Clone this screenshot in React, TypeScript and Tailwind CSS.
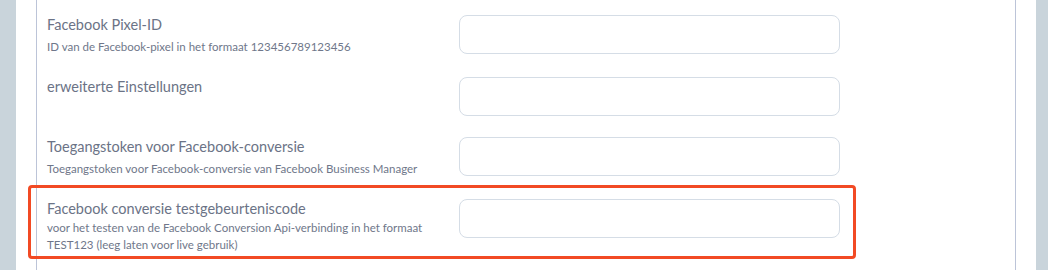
import React from 'react';

interface FieldRowProps {
  label: string;
  description?: React.ReactNode;
  height: string;
  descClass?: string;
  highlight?: boolean;
}

const FieldRow: React.FC<FieldRowProps> = ({ label, description, height, descClass = 'mt-[3px]', highlight = false }) => {
  return (
    <div className={`relative flex pl-[10px] ${height}`}>
      {/* Label + help text */}
      <div className="w-[412px] shrink-0 pt-[15px]">
        <div className="text-[14.5px] leading-5 text-[#6b7386]">{label}</div>
        {description && (
          <div className={`text-[11.5px] leading-[17px] text-[#6f778a] ${descClass}`}>{description}</div>
        )}
      </div>

      {/* Input */}
      <div className="pt-[15px]">
        <input
          type="text"
          className="h-[39px] w-[381px] rounded-lg border border-[#d5dde6] bg-white outline-none"
        />
      </div>

      {/* Annotation box */}
      {highlight && (
        <div className="pointer-events-none absolute top-[0.5px] -left-[9px] h-[74px] w-[828px] rounded-[4px] border-[3px] border-[#f24a24]" />
      )}
    </div>
  );
};

export default function App() {
  return (
    <div
      className="flex h-[270px] w-[1048px] overflow-hidden bg-white"
      style={{ fontFamily: 'Lato, "Noto Sans", sans-serif' }}
    >
      <div className="w-4 shrink-0 bg-[#c9d4db]" />

      <div className="flex-1 px-5">
        <div className="h-full border-x border-[#bcc4d8]">
          <FieldRow
            height="h-[62px]"
            label="Facebook Pixel-ID"
            description="ID van de Facebook-pixel in het formaat 123456789123456"
          />
          <FieldRow height="h-[60px]" label="erweiterte Einstellungen" />
          <FieldRow
            height="h-[62px]"
            label="Toegangstoken voor Facebook-conversie"
            description="Toegangstoken voor Facebook-conversie van Facebook Business Manager"
          />
          <FieldRow
            height="h-[86px]"
            highlight
            descClass="mt-0"
            label="Facebook conversie testgebeurteniscode"
            description={
              <>
                voor het testen van de Facebook Conversion Api-verbinding in het formaat
                <br />
                TEST123 (leeg laten voor live gebruik)
              </>
            }
          />
        </div>
      </div>

      <div className="w-3 shrink-0 bg-[#c9d4db]" />
    </div>
  );
}
